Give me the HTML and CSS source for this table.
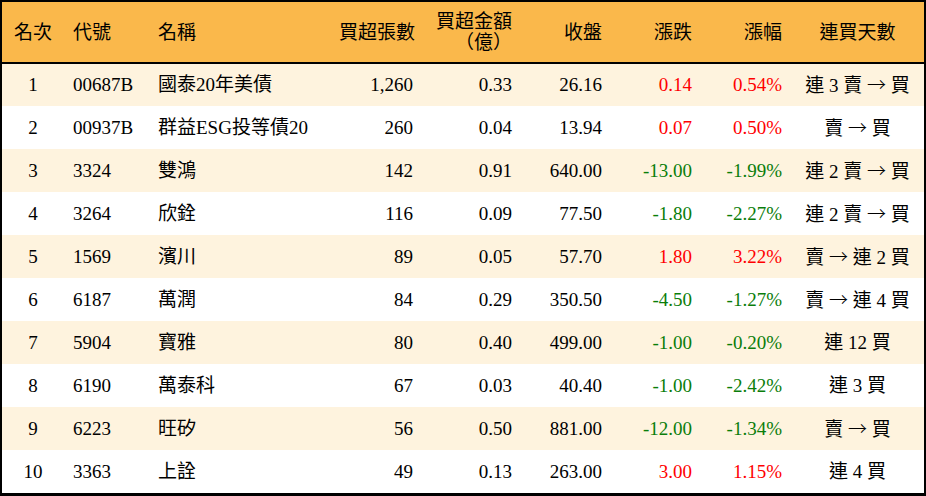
FILE: index.html
```html
<!DOCTYPE html>
<html lang="zh-Hant">
<head>
<meta charset="utf-8">
<title>買超排行</title>
<link rel="stylesheet" href="styles.css">
</head>
<body>
<div class="frame">
<table class="rank">
  <colgroup>
    <col class="c-rank"><col class="c-code"><col class="c-name"><col class="c-num">
    <col class="c-amt"><col class="c-n"><col class="c-n"><col class="c-n"><col class="c-days">
  </colgroup>
  <thead>
    <tr>
      <th class="ctr">名次</th>
      <th class="lft">代號</th>
      <th class="lft">名稱</th>
      <th class="rgt">買超張數</th>
      <th class="rgt two">買超金額<br>（億）</th>
      <th class="rgt">收盤</th>
      <th class="rgt">漲跌</th>
      <th class="rgt">漲幅</th>
      <th class="ctr">連買天數</th>
    </tr>
  </thead>
  <tbody>
    <tr class="odd"><td class="ctr">1</td><td class="lft">00687B</td><td class="lft">國泰20年美債</td><td class="rgt">1,260</td><td class="rgt">0.33</td><td class="rgt">26.16</td><td class="rgt up">0.14</td><td class="rgt up">0.54%</td><td class="ctr">連 3 賣 <span class="arr">→</span> 買</td></tr>
    <tr><td class="ctr">2</td><td class="lft">00937B</td><td class="lft">群益ESG投等債20</td><td class="rgt">260</td><td class="rgt">0.04</td><td class="rgt">13.94</td><td class="rgt up">0.07</td><td class="rgt up">0.50%</td><td class="ctr">賣 <span class="arr">→</span> 買</td></tr>
    <tr class="odd"><td class="ctr">3</td><td class="lft">3324</td><td class="lft">雙鴻</td><td class="rgt">142</td><td class="rgt">0.91</td><td class="rgt">640.00</td><td class="rgt dn">-13.00</td><td class="rgt dn">-1.99%</td><td class="ctr">連 2 賣 <span class="arr">→</span> 買</td></tr>
    <tr><td class="ctr">4</td><td class="lft">3264</td><td class="lft">欣銓</td><td class="rgt">116</td><td class="rgt">0.09</td><td class="rgt">77.50</td><td class="rgt dn">-1.80</td><td class="rgt dn">-2.27%</td><td class="ctr">連 2 賣 <span class="arr">→</span> 買</td></tr>
    <tr class="odd"><td class="ctr">5</td><td class="lft">1569</td><td class="lft">濱川</td><td class="rgt">89</td><td class="rgt">0.05</td><td class="rgt">57.70</td><td class="rgt up">1.80</td><td class="rgt up">3.22%</td><td class="ctr">賣 <span class="arr">→</span> 連 2 買</td></tr>
    <tr><td class="ctr">6</td><td class="lft">6187</td><td class="lft">萬潤</td><td class="rgt">84</td><td class="rgt">0.29</td><td class="rgt">350.50</td><td class="rgt dn">-4.50</td><td class="rgt dn">-1.27%</td><td class="ctr">賣 <span class="arr">→</span> 連 4 買</td></tr>
    <tr class="odd"><td class="ctr">7</td><td class="lft">5904</td><td class="lft">寶雅</td><td class="rgt">80</td><td class="rgt">0.40</td><td class="rgt">499.00</td><td class="rgt dn">-1.00</td><td class="rgt dn">-0.20%</td><td class="ctr">連 12 買</td></tr>
    <tr><td class="ctr">8</td><td class="lft">6190</td><td class="lft">萬泰科</td><td class="rgt">67</td><td class="rgt">0.03</td><td class="rgt">40.40</td><td class="rgt dn">-1.00</td><td class="rgt dn">-2.42%</td><td class="ctr">連 3 買</td></tr>
    <tr class="odd"><td class="ctr">9</td><td class="lft">6223</td><td class="lft">旺矽</td><td class="rgt">56</td><td class="rgt">0.50</td><td class="rgt">881.00</td><td class="rgt dn">-12.00</td><td class="rgt dn">-1.34%</td><td class="ctr">賣 <span class="arr">→</span> 買</td></tr>
    <tr><td class="ctr">10</td><td class="lft">3363</td><td class="lft">上詮</td><td class="rgt">49</td><td class="rgt">0.13</td><td class="rgt">263.00</td><td class="rgt up">3.00</td><td class="rgt up">1.15%</td><td class="ctr">連 4 買</td></tr>
  </tbody>
</table>
</div>
</body>
</html>
```

FILE: styles.css
```css
html, body {
  margin: 0;
  padding: 0;
  background: #ffffff;
}
.frame {
  width: 926px;
  height: 496px;
  box-sizing: border-box;
  border-top: 2px solid #000;
  border-left: 2px solid #000;
  border-right: 2px solid #000;
  border-bottom: 3px solid #000;
  background: #fff;
  overflow: hidden;
}
.rank {
  width: 922px;
  border-collapse: collapse;
  table-layout: fixed;
  font-family: "Liberation Serif", "Noto Sans CJK TC", serif;
  font-size: 19px;
  color: #000;
  text-spacing-trim: space-all;
}
.c-rank { width: 62px; }
.c-code { width: 85px; }
.c-name { width: 181px; }
.c-num { width: 92px; }
.c-amt { width: 99px; }
.c-n { width: 90px; }
.c-days { width: 133px; }

.rank thead th {
  background: #fab84b;
  height: 59px;
  font-weight: normal;
  padding: 0 9px;
  line-height: 21px;
  border-bottom: 2px solid #000;
  box-sizing: border-box;
  white-space: nowrap;
}
.rank thead tr { height: 61px; }
.rank tbody tr { height: 43px; }
.rank tbody tr.odd td { background: #fef3de; }
.rank td {
  padding: 0 9px;
  white-space: nowrap;
  line-height: 22px;
}
.ctr { text-align: center; }
.lft { text-align: left; }
.rgt { text-align: right; }
.rank th.ctr { padding: 0; }
.rank td.ctr { padding: 0; }
.up { color: #ff0000; }
.dn { color: #0a7d0a; }
.arr {
  font-family: "Noto Sans CJK TC", "DejaVu Sans", sans-serif;
  font-weight: 300;
}
```
